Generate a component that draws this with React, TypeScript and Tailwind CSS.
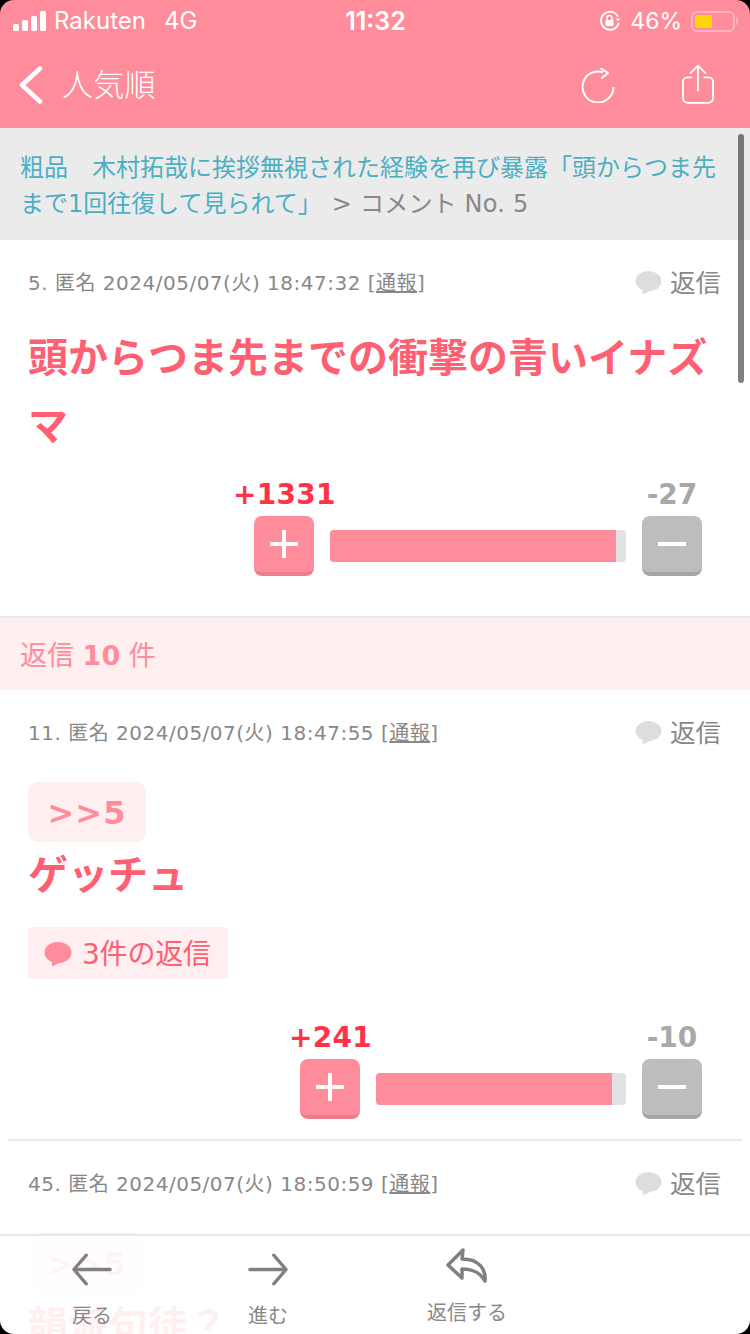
import React from "react";

const jp = "font-['DejaVu_Sans','Noto_Sans_CJK_JP',sans-serif]";

function Bubble({ className }: { className: string }) {
  return (
    <svg viewBox="0 0 28 25" className={className} fill="currentColor">
      <ellipse cx="14" cy="10.5" rx="13.5" ry="10.5" />
      <path d="M8 18 L8 24.5 L17 20 Z" />
    </svg>
  );
}

function Meta({ no, time }: { no: string; time: string }) {
  return (
    <div className="flex h-[44px] items-center justify-between pl-[28px] pr-[29px]">
      <div className="text-[20px] leading-[28px] tracking-[0.5px] text-[#888888]">
        {no}. 匿名 2024/05/07(火) {time} [<span className="underline">通報</span>]
      </div>
      <div className="flex items-center gap-[8px]">
        <Bubble className="h-[24px] w-[27px] text-[#dddddd]" />
        <span className="text-[25.5px] leading-[32px] text-[#888888]">返信</span>
      </div>
    </div>
  );
}

function VoteButton({ kind }: { kind: "plus" | "minus" }) {
  const plus = kind === "plus";
  return (
    <div
      className={
        plus
          ? "flex h-[60px] w-[60px] items-center justify-center rounded-[8px] border-b-[4px] border-[#ee7d8c] bg-[#ff8c9a]"
          : "flex h-[60px] w-[60px] items-center justify-center rounded-[8px] border-b-[4px] border-[#a6a6a6] bg-[#bdbdbd]"
      }
    >
      <svg viewBox="0 0 28 28" className="h-[28px] w-[28px]" fill="#fff">
        <rect x="0" y="12" width="28" height="4" />
        {plus && <rect x="12" y="0" width="4" height="28" />}
      </svg>
    </div>
  );
}

function Vote({
  up,
  down,
  barClass,
  fillClass,
  upClass,
}: {
  up: string;
  down: string;
  barClass: string;
  fillClass: string;
  upClass: string;
}) {
  return (
    <div className="flex justify-end pr-[48px]">
      <div className="flex flex-col items-start">
        <div className="flex h-[36px] w-full items-start justify-between">
          <span className={`text-[28px] font-bold leading-[30px] tracking-[0.3px] text-[#ff3347] ${upClass}`}>{up}</span>
          <span className="w-[60px] text-center text-[28px] font-bold leading-[30px] text-[#a8a8a8]">{down}</span>
        </div>
        <div className="flex items-center gap-[16px]">
          <VoteButton kind="plus" />
          <div className={`h-[32px] overflow-hidden rounded-[4px] bg-[#e2e2e2] ${barClass}`}>
            <div className={`h-full bg-[#ff8c9a] ${fillClass}`} />
          </div>
          <VoteButton kind="minus" />
        </div>
      </div>
    </div>
  );
}

export default function App() {
  return (
    <div className={`relative h-[1334px] w-[750px] overflow-hidden bg-white ${jp}`}>
      <header className="h-[128px] bg-[#ff8c9a] text-white">
        <div className="grid h-[42px] grid-cols-3 items-center pl-[13px] pr-[12px] font-['Inter','Noto_Sans_CJK_JP',sans-serif]">
          <div className="flex items-center">
            <svg viewBox="0 0 33 20" className="h-[20px] w-[33px]" fill="#fff">
              <rect x="0" y="13" width="6" height="7" rx="1.5" />
              <rect x="9" y="9" width="6" height="11" rx="1.5" />
              <rect x="18" y="5" width="6" height="15" rx="1.5" />
              <rect x="27" y="0" width="6" height="20" rx="1.5" />
            </svg>
            <span className="ml-[8px] text-[24px] leading-[30px]">Rakuten</span>
            <span className="ml-[18px] text-[24px] leading-[30px]">4G</span>
          </div>
          <div className="text-center text-[25px] font-semibold leading-[30px]">11:32</div>
          <div className="flex items-center justify-end">
            <svg viewBox="0 0 22 22" className="h-[22px] w-[22px]" fill="none" stroke="#fff" strokeWidth="2">
              <path d="M19 6.5A9 9 0 1 0 19.8 13" />
              <path d="M16.5 8.5h5L19 11.5z" fill="#fff" stroke="none" />
              <rect x="6.5" y="10" width="8" height="6" rx="1" fill="#fff" stroke="none" />
              <path d="M8 10V8a2.5 2.5 0 0 1 5 0v2" strokeWidth="1.5" />
            </svg>
            <span className="ml-[9px] text-[23px] leading-[30px]">46%</span>
            <div className="ml-[9px] flex items-center">
              <div className="h-[21px] w-[44px] rounded-[6px] border-[2px] border-[#ffb4bd] p-[2px]">
                <div className="h-full w-[17px] rounded-[2px] bg-[#ffd60a]" />
              </div>
              <div className="ml-[1px] h-[8px] w-[2px] rounded-r-[2px] bg-[#ffb4bd]" />
            </div>
          </div>
        </div>
        <div className="flex h-[86px] items-center pl-[19px] pr-[36px]">
          <svg viewBox="0 0 24 38" className="h-[38px] w-[24px]" fill="none" stroke="#fff" strokeWidth="4.5" strokeLinecap="round" strokeLinejoin="round">
            <path d="M21 2.5 3 19l18 16.5" />
          </svg>
          <span className="ml-[19px] text-[31px] font-light leading-[40px] tracking-[0.3px]">人気順</span>
          <div className="ml-auto flex items-center gap-[67px]">
            <svg viewBox="0 0 34 35" className="h-[35px] w-[34px]" fill="none" stroke="#fff" strokeWidth="2">
              <path d="M22 4.300A15.500 15.500 0 1 0 32.500 19" />
              <path d="M20 0.500 27 5l-6 5" strokeLinecap="round" strokeLinejoin="round" />
            </svg>
            <svg viewBox="0 0 34 42" className="-mt-[3px] h-[40px] w-[32px]" fill="none" stroke="#fff" strokeWidth="2" strokeLinecap="round" strokeLinejoin="round">
              <path d="M17 28V2M9 9.500 17 1.500l8 8" />
              <path d="M10 14H6a5 5 0 0 0-5 5v17a5 5 0 0 0 5 5h22a5 5 0 0 0 5-5V19a5 5 0 0 0-5-5h-4" />
            </svg>
          </div>
        </div>
      </header>

      <div className="h-[112px] bg-[#ebebeb] pl-[20px] pr-[21px] pt-[22px] text-[24px] leading-[36px] text-[#888888]">
        <span className="text-[#4bafc4]">粗品　木村拓哉に挨拶無視された経験を再び暴露「頭からつま先まで1回往復して見られて」</span>
        <span className="ml-[10px] tracking-[0.2px]">&gt; コメント No. 5</span>
      </div>

      <section className="h-[376px] pt-[21px]">
        <Meta no="5" time="18:47:32" />
        <div className="mt-[19px] px-[28px] text-[40px] font-bold leading-[68px] text-[#ff5f73]">
          頭からつま先までの衝撃の青いイナズマ
        </div>
        <div className="mt-[20px]">
          <Vote up="+1331" down="-27" barClass="w-[296px]" fillClass="w-[286px]" upClass="-ml-[21px]" />
        </div>
      </section>

      <div className="flex h-[74px] items-center border-t-[2px] border-[#e8e8e8] bg-[#ffeff0] px-[20px] pt-[4px] text-[27px] text-[#ff8c9a]">
        返信&nbsp;<b>10</b>&nbsp;件
      </div>

      <section className="h-[449px] pt-[21px]">
        <Meta no="11" time="18:47:55" />
        <div className="mt-[27px] px-[28px]">
          <div className="flex h-[60px] w-[118px] items-center justify-center rounded-[10px] bg-[#ffeff0] pt-[2px] text-[32px] font-bold tracking-[1px] text-[#ff8c9a]">
            &gt;&gt;5
          </div>
          <div className="mt-[5px] text-[40px] font-bold leading-[56px] text-[#ff5f73]">ゲッチュ</div>
          <div className="mt-[24px] flex h-[52px] w-[200px] items-center gap-[10px] rounded-[4px] bg-[#ffeff0] pl-[16px] text-[28px] text-[#ff5f73]">
            <Bubble className="mt-[3px] h-[25px] w-[28px] text-[#ff8c9a]" />
            <span className="mt-[4px] tracking-[-0.2px]">3件の返信</span>
          </div>
        </div>
        <div className="mt-[44px]">
          <Vote up="+241" down="-10" barClass="w-[250px]" fillClass="w-[236px]" upClass="-ml-[11px]" />
        </div>
      </section>

      <div className="mx-[8px] h-[2px] bg-[#e8e8e8]" />

      <section className="pt-[21px]">
        <Meta no="45" time="18:50:59" />
        <div className="mt-[27px] px-[28px]">
          <div className="flex h-[60px] w-[118px] items-center justify-center rounded-[10px] bg-[#ffeff0] pt-[2px] text-[32px] font-bold tracking-[1px] text-[#ff8c9a]">
            &gt;&gt;5
          </div>
          <div className="mt-[5px] text-[40px] font-bold leading-[56px] text-[#ff5f73]">韻派句徒？</div>
        </div>
      </section>

      <nav className="absolute bottom-0 left-0 flex h-[100px] w-full items-start border-t-[2px] border-[#e8e8e8] bg-white/90 pl-[52px] text-[20px] leading-[28px] text-[#888888]">
        <div className="flex w-[80px] flex-col items-center pt-[17px]">
          <svg viewBox="0 0 42 34" className="h-[33px] w-[40px]" fill="none" stroke="#808080" strokeWidth="3.500" strokeLinecap="round" strokeLinejoin="round">
            <path d="M40 17H2M15 2 2 17l13 15" />
          </svg>
          <span className="mt-[16px]">戻る</span>
        </div>
        <div className="ml-[96px] flex w-[80px] flex-col items-center pt-[17px]">
          <svg viewBox="0 0 42 34" className="h-[33px] w-[40px]" fill="none" stroke="#808080" strokeWidth="3.500" strokeLinecap="round" strokeLinejoin="round">
            <path d="M2 17h38M27 2l13 15-13 15" />
          </svg>
          <span className="mt-[16px]">進む</span>
        </div>
        <div className="ml-[119px] flex w-[80px] flex-col items-center pt-[12px]">
          <svg viewBox="0 0 42 36" className="h-[36px] w-[42px]" fill="none" stroke="#808080" strokeWidth="3.500" strokeLinecap="round" strokeLinejoin="round">
            <path d="M17 2 2 17l14 13v-9c9 0 17 2 23 12 1-11-5-22-23-22z" />
          </svg>
          <span className="mt-[15px] whitespace-nowrap">返信する</span>
        </div>
      </nav>

      <div className="absolute right-[6px] top-[134px] h-[249px] w-[6px] rounded-full bg-black/50" />
      <div className="pointer-events-none absolute inset-0 rounded-[14px] shadow-[0_0_0_20px_#000]" />
    </div>
  );
}
